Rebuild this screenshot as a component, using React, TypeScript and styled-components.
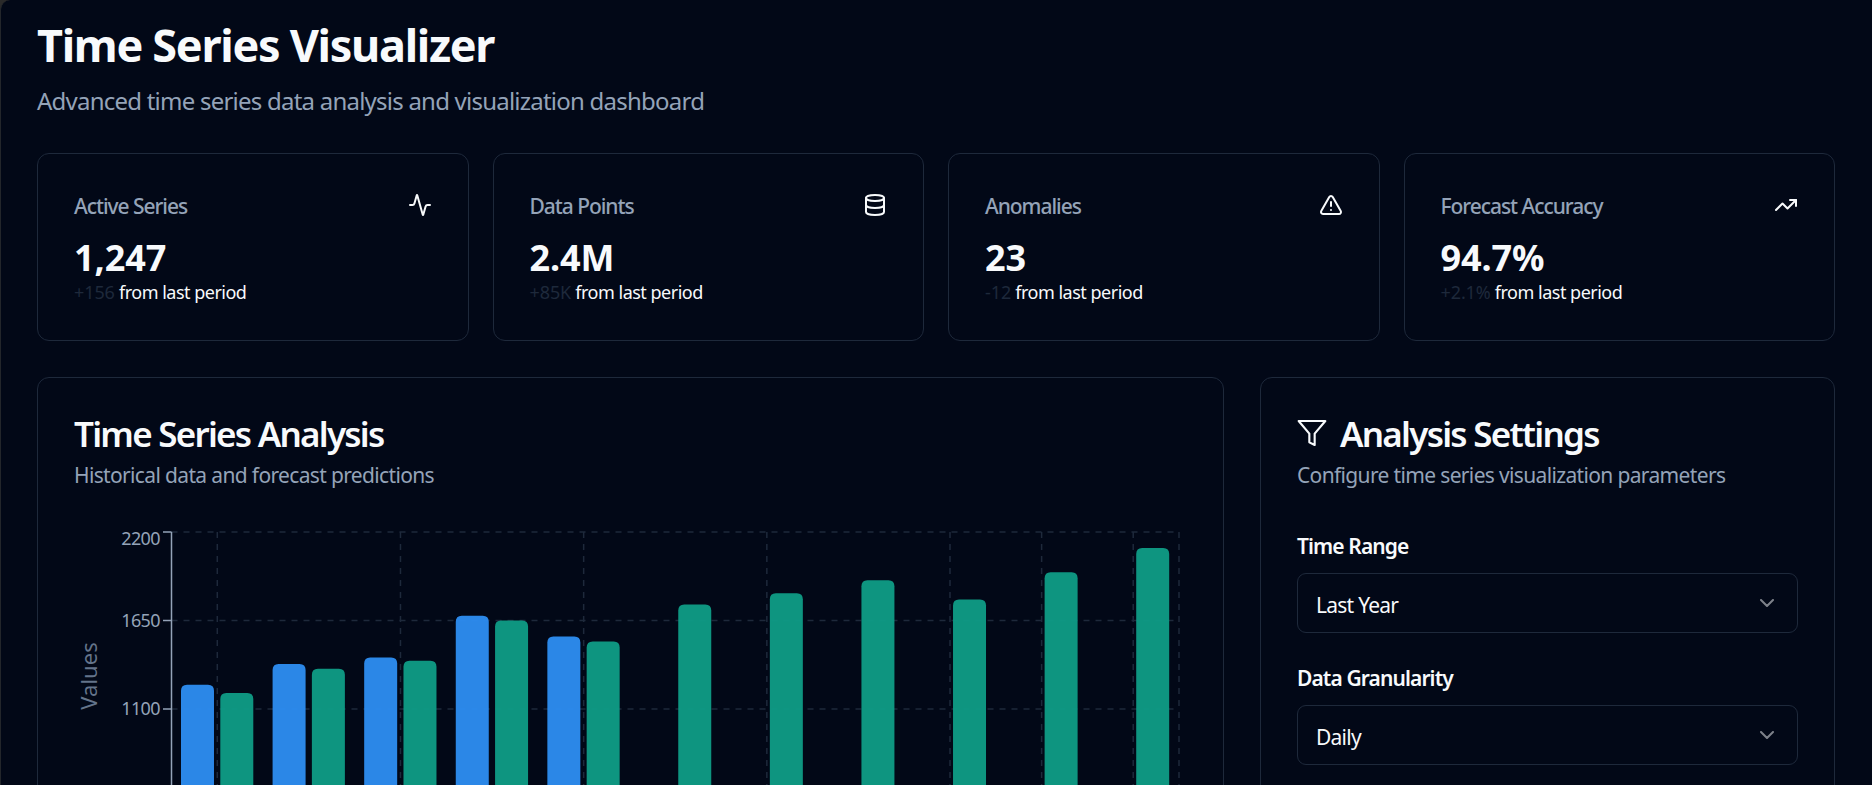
import React from 'react'
import styled, { createGlobalStyle } from 'styled-components'
import { Activity, ChevronDown, Database, TrendingUp, TriangleAlert } from 'lucide-react'

const GlobalStyle = createGlobalStyle`
    * {
        box-sizing: border-box;
    }

    html, body {
        margin: 0;
        height: 100%;
        overflow: hidden;
        background: #2a2a2a;
    }

    body {
        font-family: "Noto Sans", "Open Sans", sans-serif;
        color: #f8fafc;
    }
`

const Page = styled.main`
    height: 100vh;
    overflow: hidden;
    padding: 18px 37px 0 36px;
    background: #020817;
    border-left: 1px solid #23262b;
    border-top-left-radius: 10px;
`

const Header = styled.header`
    margin-bottom: 34px;
`

const PageTitle = styled.h1`
    margin: 0;
    font-size: 45px;
    line-height: 54px;
    font-weight: 700;
    letter-spacing: -1.3px;
`

const PageSubtitle = styled.p`
    margin: 11px 0 0;
    font-size: 24px;
    line-height: 36px;
    letter-spacing: -0.77px;
    color: #94a3b8;
`

const StatGrid = styled.section`
    display: grid;
    grid-template-columns: repeat(4, 1fr);
    gap: 24px;
    margin-bottom: 36px;
`

const Card = styled.div`
    border: 1px solid #1e293b;
    border-radius: 12px;
    background: #020817;
`

const StatCard = styled(Card)`
    padding: 36px;
`

const StatTop = styled.div`
    display: flex;
    align-items: center;
    justify-content: space-between;
    padding-bottom: 12px;
    color: #f8fafc;
`

const StatLabel = styled.span`
    margin-bottom: -2px;
    font-size: 21px;
    line-height: 32px;
    font-weight: 500;
    letter-spacing: -1.05px;
    color: #94a3b8;
`

const StatValue = styled.div`
    margin-bottom: -4px;
    font-size: 36px;
    line-height: 52px;
    font-weight: 700;
    letter-spacing: -0.1px;
`

const StatNote = styled.p`
    margin: 0;
    font-size: 18px;
    line-height: 24px;
    letter-spacing: -0.5px;
`

const StatChange = styled.span`
    letter-spacing: -0.1px;
    color: #1e293b;
`

const Columns = styled.section`
    display: grid;
    grid-template-columns: 1fr 575px;
    gap: 36px;
`

const PanelHead = styled.div`
    padding: 36px 36px 0;
`

const PanelTitle = styled.h2`
    display: flex;
    align-items: center;
    gap: 12px;
    margin: 0;
    padding-top: 2px;
    font-size: 35px;
    line-height: 36px;
    font-weight: 600;
    letter-spacing: -1.75px;

    svg {
        margin-top: -2px;
        margin-left: -1px;
    }
`

const PanelHint = styled.p`
    margin: 8px 0 0;
    font-size: 21px;
    line-height: 30px;
    letter-spacing: -0.65px;
    color: #94a3b8;
`

const ChartBody = styled.div`
    padding: 35px 36px 36px;
`

const ChartSvg = styled.svg`
    display: block;
    width: 100%;
    height: 460px;
`

const GridLine = styled.line`
    stroke: #1e293b;
    stroke-width: 1.5;
    stroke-dasharray: 6 6;
`

const AxisLine = styled.line`
    stroke: #94a3b8;
    stroke-width: 1.5;
`

const AxisText = styled.text`
    fill: #94a3b8;
    font-size: 18px;
    letter-spacing: -0.6px;
    text-anchor: end;
`

const AxisTitle = styled.text`
    fill: #64748b;
    font-size: 22px;
    text-anchor: middle;
`

const Bar = styled.path<{ $tone: 'actual' | 'forecast' }>`
    fill: ${({ $tone }) => ($tone === 'actual' ? '#2d8cf0' : '#0f9b85')};
    fill-opacity: 0.96;
`

const Settings = styled.div`
    padding: 41px 36px 36px;
    display: flex;
    flex-direction: column;
    gap: 30px;
`

const Field = styled.label`
    display: block;
`

const FieldName = styled.span`
    display: block;
    margin-bottom: 12px;
    font-size: 21px;
    line-height: 30px;
    font-weight: 600;
    letter-spacing: -0.9px;
`

const Select = styled.div`
    display: flex;
    align-items: center;
    justify-content: space-between;
    height: 60px;
    padding: 0 18px;
    border: 1px solid #1e293b;
    border-radius: 9px;
    font-size: 21px;
    line-height: 34px;
    letter-spacing: -0.75px;

    svg {
        opacity: 0.5;
    }
`

const SelectText = styled.span`
    padding-top: 3px;
`

const FilterIcon = () => (
    <svg width="32" height="32" viewBox="0 0 24 24" fill="none" stroke="currentColor" strokeWidth="1.6" strokeLinecap="round" strokeLinejoin="round">
        <polygon points="22 3 2 3 10 12.46 10 19 14 21 14 12.46 22 3" />
    </svg>
)

const stats = [
    { label: 'Active Series', value: '1,247', change: '+156', Icon: Activity },
    { label: 'Data Points', value: '2.4M', change: '+85K', Icon: Database },
    { label: 'Anomalies', value: '23', change: '-12', Icon: TriangleAlert },
    { label: 'Forecast Accuracy', value: '94.7%', change: '+2.1%', Icon: TrendingUp },
]

const series = [
    { actual: 1250, forecast: 1200 },
    { actual: 1380, forecast: 1350 },
    { actual: 1420, forecast: 1400 },
    { actual: 1680, forecast: 1650 },
    { actual: 1550, forecast: 1520 },
    { forecast: 1750 },
    { forecast: 1820 },
    { forecast: 1900 },
    { forecast: 1780 },
    { forecast: 1950 },
    { forecast: 2100 },
]

// plot area, in page pixels (the svg viewBox starts at the card's content corner)
const plotLeft = 171.5
const plotRight = 1179
const plotTop = 532
const plotBottom = 886
const band = (plotRight - plotLeft) / series.length
const barWidth = 33

const valueY = (v: number) => plotBottom - (v * (plotBottom - plotTop)) / 2200

const barPath = (x: number, v: number) => {
    const y = valueY(v)
    const r = 6
    return `M${x},${plotBottom} V${y + r} Q${x},${y} ${x + r},${y} H${x + barWidth - r} Q${x + barWidth},${y} ${x + barWidth},${y + r} V${plotBottom} Z`
}

const gridColumns = [0, 2, 4, 6, 8, 9, 10]
// only the ticks above the fold
const ticks = [2200, 1650, 1100]

const SeriesChart = () => (
    <ChartSvg viewBox="74 525 1112 460" preserveAspectRatio="xMinYMin meet">
        {ticks.map((t) => (
            <GridLine key={t} x1={plotLeft} x2={t === 2200 ? plotRight : 1175} y1={valueY(t)} y2={valueY(t)} />
        ))}
        {gridColumns.map((i) => {
            const x = plotLeft + band * (i + 0.5)
            return <GridLine key={i} x1={x} x2={x} y1={plotTop} y2={plotBottom} />
        })}
        <GridLine x1={plotRight} x2={plotRight} y1={plotTop} y2={plotBottom} />
        {series.map((d, i) => {
            const center = plotLeft + band * (i + 0.5)
            return (
                <g key={i}>
                    {d.actual !== undefined && <Bar $tone="actual" d={barPath(center - 36.3, d.actual)} />}
                    <Bar $tone="forecast" d={barPath(center + 3, d.forecast)} />
                </g>
            )
        })}
        <AxisLine x1={plotLeft} x2={plotLeft} y1={plotTop} y2={plotBottom} />
        {ticks.map((t) => (
            <g key={t}>
                <AxisLine x1={163} x2={plotLeft} y1={valueY(t)} y2={valueY(t)} />
                <AxisText x={160} y={t === 2200 ? 545 : valueY(t) + 6}>{t}</AxisText>
            </g>
        ))}
        <AxisTitle transform="translate(97 676) rotate(-90)">Values</AxisTitle>
    </ChartSvg>
)

export default function App() {
    return (
        <Page>
            <GlobalStyle />
            <Header>
                <PageTitle>Time Series Visualizer</PageTitle>
                <PageSubtitle>Advanced time series data analysis and visualization dashboard</PageSubtitle>
            </Header>
            <StatGrid>
                {stats.map(({ label, value, change, Icon }) => (
                    <StatCard key={label}>
                        <StatTop>
                            <StatLabel>{label}</StatLabel>
                            <Icon size={24} />
                        </StatTop>
                        <StatValue>{value}</StatValue>
                        <StatNote><StatChange>{change}</StatChange> from last period</StatNote>
                    </StatCard>
                ))}
            </StatGrid>
            <Columns>
                <Card>
                    <PanelHead>
                        <PanelTitle>Time Series Analysis</PanelTitle>
                        <PanelHint>Historical data and forecast predictions</PanelHint>
                    </PanelHead>
                    <ChartBody>
                        <SeriesChart />
                    </ChartBody>
                </Card>
                <Card>
                    <PanelHead>
                        <PanelTitle><FilterIcon /> Analysis Settings</PanelTitle>
                        <PanelHint>Configure time series visualization parameters</PanelHint>
                    </PanelHead>
                    <Settings>
                        <Field>
                            <FieldName>Time Range</FieldName>
                            <Select><SelectText>Last Year</SelectText> <ChevronDown size={24} /></Select>
                        </Field>
                        <Field>
                            <FieldName>Data Granularity</FieldName>
                            <Select><SelectText>Daily</SelectText> <ChevronDown size={24} /></Select>
                        </Field>
                    </Settings>
                </Card>
            </Columns>
        </Page>
    )
}
